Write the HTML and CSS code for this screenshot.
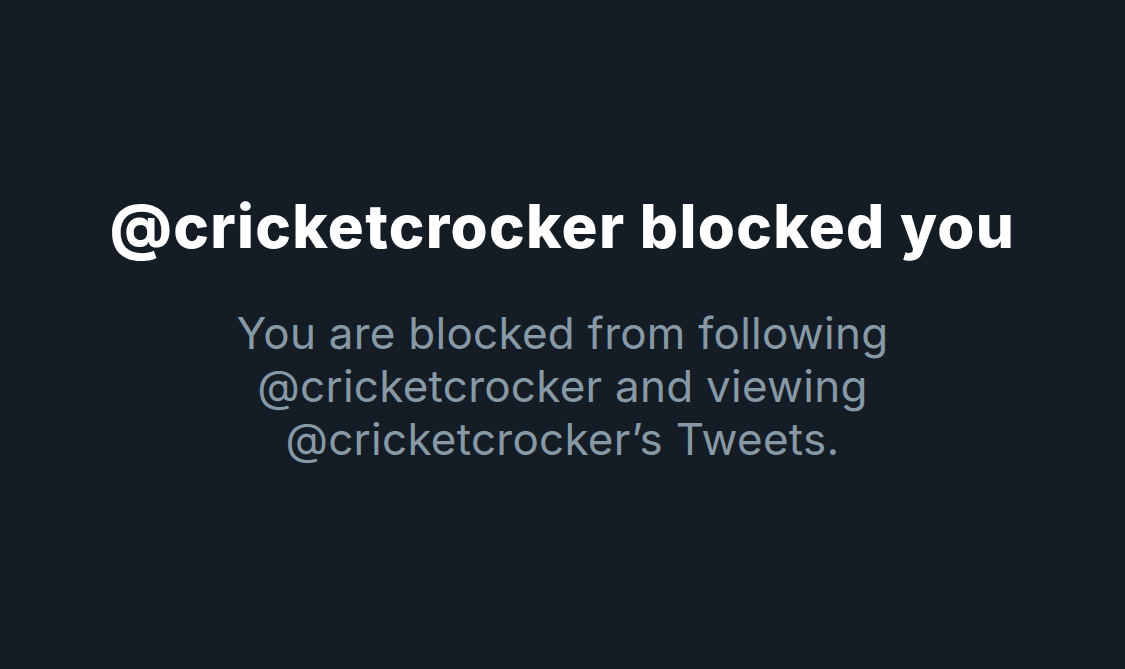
FILE: index.html
```html
<!DOCTYPE html>
<html>
<head>
<meta charset="utf-8">
<link rel="stylesheet" href="styles.css">
</head>
<body>
<main class="screen">
  <section class="blocked">
    <h1 class="title">@cricketcrocker blocked you</h1>
    <p class="message">You are blocked from following<br>@cricketcrocker and viewing<br>@cricketcrocker’s Tweets.</p>
  </section>
</main>
</body>
</html>
```

FILE: styles.css
```css
html, body {
  margin: 0;
  padding: 0;
  background: #141d26;
}
.screen {
  width: 1125px;
  height: 669px;
  display: flex;
  align-items: center;
  justify-content: center;
  font-family: Inter, "Noto Sans", sans-serif;
}
.blocked {
  display: flex;
  flex-direction: column;
  align-items: center;
  text-align: center;
  padding-bottom: 9px;
}
.title {
  margin: 0;
  color: #ffffff;
  font-size: 60px;
  font-weight: 800;
  letter-spacing: 1.3px;
  line-height: 64px;
}
.message {
  margin: 49px 0 0;
  color: #8899a6;
  font-size: 44px;
  font-weight: 400;
  letter-spacing: 0.25px;
  line-height: 53px;
}
```
